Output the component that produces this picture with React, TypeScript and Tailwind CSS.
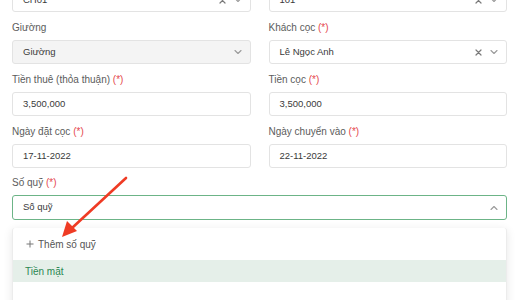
import React from "react";

const font = { fontFamily: '"Liberation Sans", Arial, sans-serif' };

function Req() {
  return <span className="text-[#e5484d]"> (*)</span>;
}

function Chevron({ up = false }: { up?: boolean }) {
  return (
    <svg width="8" height="6" viewBox="0 0 8 6" className="text-[#9a9a9a]">
      <path
        d={up ? "M1 4.5 L4 1.5 L7 4.5" : "M1 1.5 L4 4.5 L7 1.5"}
        fill="none"
        stroke="currentColor"
        strokeWidth="1.1"
        strokeLinecap="round"
        strokeLinejoin="round"
      />
    </svg>
  );
}

function Clear() {
  return (
    <svg width="7" height="7" viewBox="0 0 7 7" className="text-[#7a7a7a]">
      <path d="M1 1 L6 6 M6 1 L1 6" stroke="currentColor" strokeWidth="1.2" strokeLinecap="round" />
    </svg>
  );
}

function Field({
  label,
  required,
  children,
}: {
  label: string;
  required?: boolean;
  children: React.ReactNode;
}) {
  return (
    <div className="flex flex-col">
      <div className="h-4 leading-4 text-[10px] text-[#5c5c5c]">
        {label}
        {required && <Req />}
      </div>
      <div className="mt-1">{children}</div>
    </div>
  );
}

function Input({ value, disabled }: { value: string; disabled?: boolean }) {
  return (
    <div
      className={`h-6 flex items-center px-[10px] rounded-[3px] border border-[#e3e3e3] text-[9.5px] text-[#3a3a3a] ${
        disabled ? "bg-[#f4f4f4]" : "bg-white"
      }`}
    >
      {value}
    </div>
  );
}

function Select({
  value,
  clearable,
  disabled,
}: {
  value: string;
  clearable?: boolean;
  disabled?: boolean;
}) {
  return (
    <div
      className={`h-6 flex items-center pl-[10px] pr-[8px] rounded-[3px] border border-[#e3e3e3] text-[9.5px] text-[#3a3a3a] ${
        disabled ? "bg-[#f4f4f4]" : "bg-white"
      }`}
    >
      <span className="flex-1">{value}</span>
      <div className="flex items-center gap-[8px]">
        {clearable && <Clear />}
        <Chevron />
      </div>
    </div>
  );
}

export default function App() {
  return (
    <div className="relative w-[520px] h-[300px] overflow-hidden bg-white" style={font}>
      <div className="-mt-8 pl-3 pr-[13px]">
        <div className="grid grid-cols-2 gap-x-[18px] gap-y-2">
          <Field label="Phòng">
            <Select value="CH01" clearable />
          </Field>
          <Field label="Phòng">
            <Select value="101" clearable />
          </Field>

          <Field label="Giường">
            <Select value="Giường" disabled />
          </Field>
          <Field label="Khách cọc" required>
            <Select value="Lê Ngọc Anh" clearable />
          </Field>

          <Field label="Tiền thuê (thỏa thuận)" required>
            <Input value="3,500,000" />
          </Field>
          <Field label="Tiền cọc" required>
            <Input value="3,500,000" />
          </Field>

          <Field label="Ngày đặt cọc" required>
            <Input value="17-11-2022" />
          </Field>
          <Field label="Ngày chuyển vào" required>
            <Input value="22-11-2022" />
          </Field>

          <div className="col-span-2 -mt-px">
            <Field label="Số quỹ" required>
              <div className="h-[25px] flex items-center pl-[10px] pr-[8px] rounded-[3px] border border-[#6cb487] bg-white text-[9.5px] text-[#3a3a3a]">
                <span className="flex-1">Số quỹ</span>
                <Chevron up />
              </div>
            </Field>

            {/* dropdown menu */}
            <div className="mt-[8px] h-[80px] bg-white rounded-[3px] border-r border-l border-[#ececec] shadow-[0_2px_10px_rgba(0,0,0,0.10)]">
              <div className="h-[32px] flex items-center pl-[13px] gap-[4px] text-[10px] text-[#555]">
                <svg width="8" height="8" viewBox="0 0 8 8" className="text-[#777]">
                  <path d="M4 0.5 V7.5 M0.5 4 H7.5" stroke="currentColor" strokeWidth="1" />
                </svg>
                <span>Thêm số quỹ</span>
              </div>
              <div className="h-[22px] flex items-center pl-[12px] bg-[#e5efe9] text-[10px] text-[#2a8752]">
                Tiền mặt
              </div>
            </div>
          </div>
        </div>
      </div>

      {/* annotation arrow */}
      <svg className="absolute left-0 top-0 pointer-events-none" width="520" height="300">
        <line x1="126" y1="178" x2="72" y2="228" stroke="#ef3b24" strokeWidth="2.6" strokeLinecap="round" />
        <polygon points="62,237 67,221 77,231" fill="#ef3b24" />
      </svg>
    </div>
  );
}
